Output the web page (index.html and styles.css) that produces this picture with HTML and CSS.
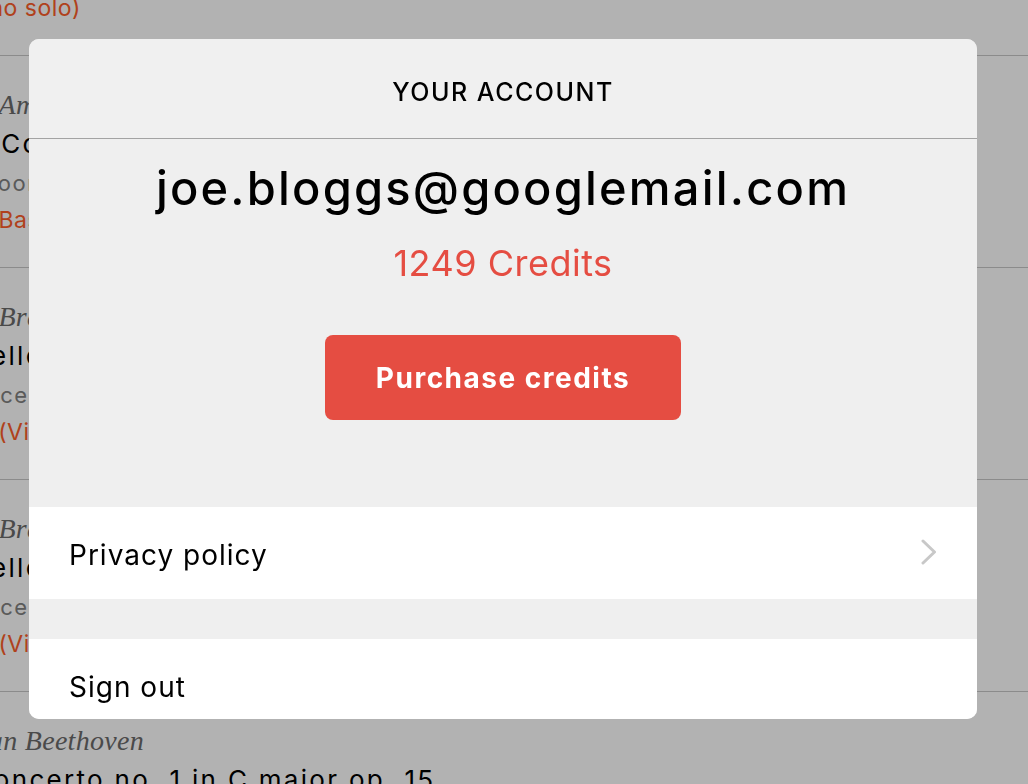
FILE: index.html
```html
<!DOCTYPE html>
<html lang="en">
<head>
    <meta charset="UTF-8">
    <meta name="viewport" content="width=device-width, initial-scale=1.0">
    <title>Your Account</title>
    <link rel="stylesheet" href="styles.css">
</head>
<body>
    <!-- track list behind the dialog -->
    <div class="track-list">
        <div class="track">
            <div class="composer">Johann Sebastian Bach</div>
            <div class="work">Goldberg Variations, BWV 988</div>
            <div class="genre">Keyboard works</div>
            <div class="performer">Pires (piano solo)</div>
        </div>
        <div class="track">
            <div class="composer">Wolfgang Amadeus Mozart</div>
            <div class="work">Fagotto Concerto in B-flat major, K. 191</div>
            <div class="genre">Solo bassoon and orchestra</div>
            <div class="performer">Capriccio Basel</div>
        </div>
        <div class="track">
            <div class="composer">Johannes Brahms</div>
            <div class="work">Violoncello Sonata no. 1 in E minor, op. 38</div>
            <div class="genre">For violoncello and piano</div>
            <div class="performer">Yo-Yo Ma (Violoncello)</div>
        </div>
        <div class="track">
            <div class="composer">Johannes Brahms</div>
            <div class="work">Violoncello Sonata no. 2 in F major, op. 99</div>
            <div class="genre">For violoncello and piano</div>
            <div class="performer">Jo du Pré (Violoncello)</div>
        </div>
        <div class="track">
            <div class="composer">Ludwig van Beethoven</div>
            <div class="work">Piano Concerto no. 1 in C major op. 15</div>
            <div class="genre">Piano and orchestra</div>
            <div class="performer">Martha Argerich (Piano)</div>
        </div>
    </div>

    <div class="overlay">
        <div class="account-modal">
            <div class="modal-header">YOUR ACCOUNT</div>
            <div class="modal-body">
                <div class="email">joe.bloggs@googlemail.com</div>
                <div class="credits">1249 Credits</div>
                <button class="purchase-btn">Purchase credits</button>
            </div>
            <a class="menu-row" href="#">
                <span>Privacy policy</span>
                <svg class="chevron" width="16" height="26" viewBox="0 0 16 26">
                    <path d="M2 2 L13.5 13 L2 24" fill="none" stroke="#c8c8c8" stroke-width="3" stroke-linecap="round" stroke-linejoin="round"/>
                </svg>
            </a>
            <div class="menu-gap"></div>
            <a class="menu-row" href="#">
                <span>Sign out</span>
            </a>
        </div>
    </div>
</body>
</html>
```

FILE: styles.css
```css
body {
    margin: 0;
    padding: 0;
    background-color: #FFFFFF;
    font-family: Inter, "Open Sans", sans-serif;
    overflow: hidden;
    height: 100vh;
}

/* Track list (dimmed behind the dialog) */
.track-list {
    margin-top: -156px;
    margin-left: -117px;
}
.track {
    height: 181px;
    padding-top: 30px;
    border-bottom: 1px solid #C8C8C8;
    white-space: nowrap;
}
.composer {
    font-family: "Liberation Serif", serif;
    font-style: italic;
    font-size: 28px;
    line-height: 38px;
    letter-spacing: 0.3px;
    color: #6B6B6B;
}
.work {
    font-size: 26px;
    line-height: 40px;
    letter-spacing: 2.3px;
    color: #000000;
}
.genre {
    font-size: 22px;
    line-height: 38px;
    letter-spacing: 1.5px;
    color: #818181;
}
.performer {
    font-size: 23px;
    line-height: 36px;
    letter-spacing: 0.5px;
    color: #FC5E2A;
}

/* Dialog */
.overlay {
    position: fixed;
    top: 0;
    left: 0;
    right: 0;
    bottom: 0;
    background-color: rgba(0, 0, 0, 0.3);
}
.account-modal {
    position: absolute;
    left: 29px;
    top: 39px;
    width: 948px;
    height: 680px;
    border-radius: 10px;
    overflow: hidden;
    background-color: #EFEFEF;
}
.modal-header {
    height: 92px;
    padding-top: 7px;
    line-height: 92px;
    text-align: center;
    font-size: 25px;
    font-weight: 500;
    letter-spacing: 1.5px;
    color: #000000;
    background-color: #F0F0F0;
    border-bottom: 1px solid #A3A3A3;
}
.modal-body {
    display: flex;
    flex-direction: column;
    align-items: center;
    padding: 21px 0 87px;
}
.email {
    font-size: 47px;
    font-weight: 500;
    line-height: 56px;
    letter-spacing: 2.2px;
    color: #000000;
}
.credits {
    margin-top: 25px;
    font-size: 36px;
    line-height: 44px;
    letter-spacing: 0.5px;
    color: #E54D42;
}
.purchase-btn {
    margin-top: 50px;
    width: 356px;
    height: 85px;
    border: none;
    border-radius: 8px;
    background-color: #E54D42;
    color: #FFFFFF;
    font-family: Inter, "Open Sans", sans-serif;
    font-size: 28px;
    font-weight: 700;
    letter-spacing: 1.5px;
    cursor: pointer;
}
.menu-row {
    display: flex;
    align-items: center;
    justify-content: space-between;
    height: 89px;
    padding: 3px 40px 0;
    background-color: #FFFFFF;
    color: #000000;
    text-decoration: none;
    font-size: 28px;
    letter-spacing: 1px;
}
.chevron {
    margin-top: -6px;
}
.menu-gap {
    height: 40px;
}
```
